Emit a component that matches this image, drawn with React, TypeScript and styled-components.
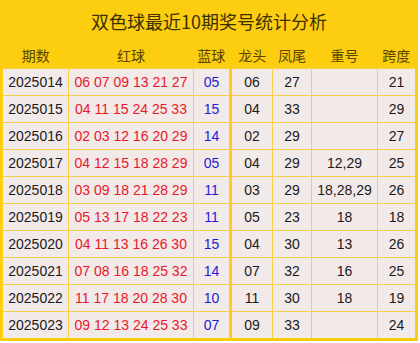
import styled, { createGlobalStyle } from "styled-components";

const GlobalStyle = createGlobalStyle`
  body {
    margin: 0;
    background: #ffffff;
    font-family: "Liberation Sans", "Noto Sans CJK SC", sans-serif;
  }
`;

const YELLOW = "#fdcd0f";
const LINE = "#f4d04a";

const Table = styled.table`
  width: 418px;
  table-layout: fixed;
  border-collapse: collapse;
  border: 3px solid ${YELLOW};
  font-size: 14px;
`;

const TitleCell = styled.th`
  height: 35px;
  padding: 0 0 4px;
  background: ${YELLOW};
  color: #3b3000;
  font-family: "Noto Sans CJK SC", sans-serif;
  font-size: 18px;
  font-weight: 400;
  text-align: center;
`;

const HeadCell = styled.th<{ $thick?: boolean }>`
  height: 26px;
  padding: 0;
  background: ${YELLOW};
  color: #5a4600;
  font-family: "Noto Sans CJK SC", sans-serif;
  font-size: 14px;
  font-weight: 400;
  text-align: center;
  border-right: ${(p) => (p.$thick ? `3px solid ${YELLOW}` : "none")};
`;

const Cell = styled.td<{ $color?: string; $thick?: boolean }>`
  height: 26px;
  padding: 0;
  background: #f2e9e9;
  color: ${(p) => p.$color ?? "#1a1a1a"};
  text-align: center;
  white-space: nowrap;
  border: 1px solid ${LINE};
  border-right: ${(p) => (p.$thick ? `3px solid ${YELLOW}` : `1px solid ${LINE}`)};
`;

type Row = {
  issue: string;
  red: string;
  blue: string;
  head: string;
  tail: string;
  repeat: string;
  span: string;
};

const rows: Row[] = [
  { issue: "2025014", red: "06 07 09 13 21 27", blue: "05", head: "06", tail: "27", repeat: "", span: "21" },
  { issue: "2025015", red: "04 11 15 24 25 33", blue: "15", head: "04", tail: "33", repeat: "", span: "29" },
  { issue: "2025016", red: "02 03 12 16 20 29", blue: "14", head: "02", tail: "29", repeat: "", span: "27" },
  { issue: "2025017", red: "04 12 15 18 28 29", blue: "05", head: "04", tail: "29", repeat: "12,29", span: "25" },
  { issue: "2025018", red: "03 09 18 21 28 29", blue: "11", head: "03", tail: "29", repeat: "18,28,29", span: "26" },
  { issue: "2025019", red: "05 13 17 18 22 23", blue: "11", head: "05", tail: "23", repeat: "18", span: "18" },
  { issue: "2025020", red: "04 11 13 16 26 30", blue: "15", head: "04", tail: "30", repeat: "13", span: "26" },
  { issue: "2025021", red: "07 08 16 18 25 32", blue: "14", head: "07", tail: "32", repeat: "16", span: "25" },
  { issue: "2025022", red: "11 17 18 20 28 30", blue: "10", head: "11", tail: "30", repeat: "18", span: "19" },
  { issue: "2025023", red: "09 12 13 24 25 33", blue: "07", head: "09", tail: "33", repeat: "", span: "24" },
];

const widths = [67, 125, 37, 42, 39, 66, 39];

export default function App() {
  return (
    <>
      <GlobalStyle />
      <Table>
        <colgroup>
          {widths.map((w, i) => (
            <col key={i} style={{ width: w }} />
          ))}
        </colgroup>
        <thead>
          <tr>
            <TitleCell colSpan={7}>双色球最近10期奖号统计分析</TitleCell>
          </tr>
          <tr>
            <HeadCell>期数</HeadCell>
            <HeadCell>红球</HeadCell>
            <HeadCell $thick>蓝球</HeadCell>
            <HeadCell>龙头</HeadCell>
            <HeadCell>凤尾</HeadCell>
            <HeadCell>重号</HeadCell>
            <HeadCell>跨度</HeadCell>
          </tr>
        </thead>
        <tbody>
          {rows.map((r) => (
            <tr key={r.issue}>
              <Cell>{r.issue}</Cell>
              <Cell $color="#e8182a">{r.red}</Cell>
              <Cell $color="#1d1dd8" $thick>
                {r.blue}
              </Cell>
              <Cell>{r.head}</Cell>
              <Cell>{r.tail}</Cell>
              <Cell>{r.repeat}</Cell>
              <Cell>{r.span}</Cell>
            </tr>
          ))}
        </tbody>
      </Table>
    </>
  );
}
